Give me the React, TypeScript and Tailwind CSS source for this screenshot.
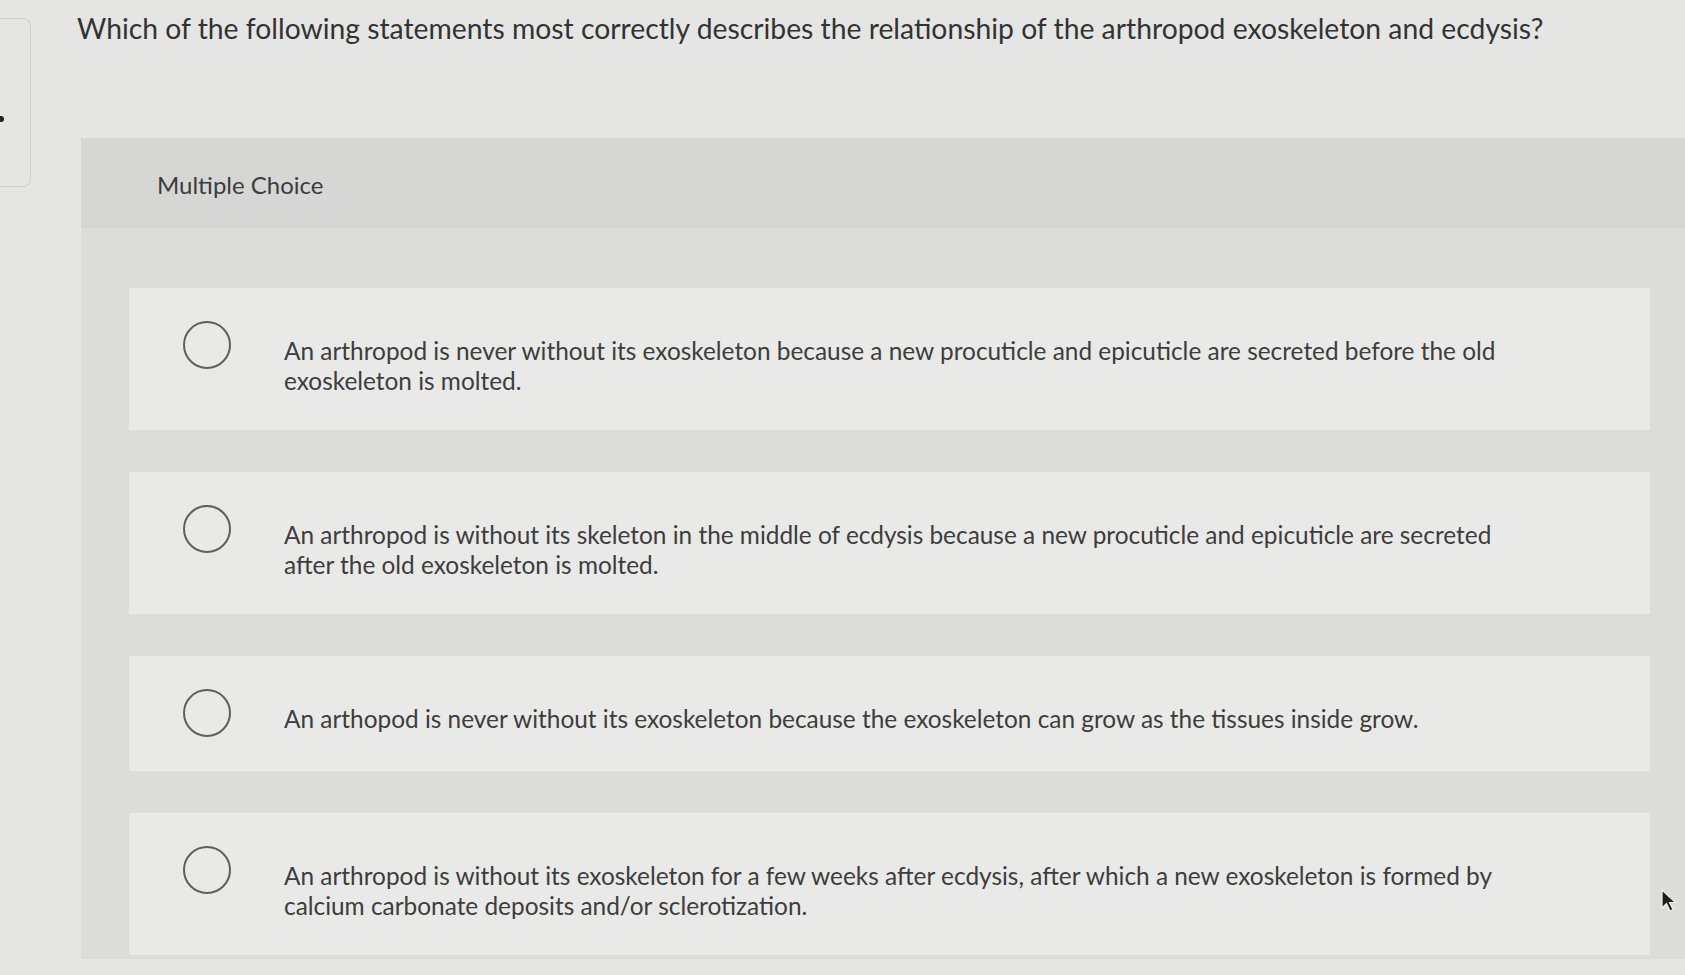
const options = [
  "An arthropod is never without its exoskeleton because a new procuticle and epicuticle are secreted before the old exoskeleton is molted.",
  "An arthropod is without its skeleton in the middle of ecdysis because a new procuticle and epicuticle are secreted after the old exoskeleton is molted.",
  "An arthopod is never without its exoskeleton because the exoskeleton can grow as the tissues inside grow.",
  "An arthropod is without its exoskeleton for a few weeks after ecdysis, after which a new exoskeleton is formed by calcium carbonate deposits and/or sclerotization.",
];

function Radio() {
  return (
    <span className="block shrink-0 w-[48px] h-[48px] rounded-full border-2 border-[#5f5f5f]" />
  );
}

export default function App() {
  return (
    <div
      className="relative w-[1685px] h-[975px] overflow-hidden bg-[#e5e5e3] flex text-[#3a3a3a]"
      style={{ fontFamily: "Lato, 'Open Sans', sans-serif" }}
    >
      {/* left edge tab */}
      <div className="w-[31px] shrink-0 pt-[18px]">
        <div className="relative h-[169px] border border-l-0 border-[#cfcfcd] rounded-r-lg">
          <span className="absolute left-0 top-[97px] w-[4px] h-[6px] bg-[#222] rounded-r-full" />
        </div>
      </div>

      <div className="flex-1 flex flex-col pl-[46px] pt-[11px]">
        <h1 className="text-[28.3px] leading-[34px] text-[#333]">
          Which of the following statements most correctly describes the relationship of the arthropod exoskeleton and ecdysis?
        </h1>

        <section className="mt-[93px] ml-[4px] bg-[#dcdcda]">
          <div className="h-[90px] pl-[76px] pt-[32px] bg-[#d6d6d4] text-[24px] leading-[30px] text-[#3c3c3c]">
            Multiple Choice
          </div>
          <div className="flex flex-col gap-[42px] pt-[60px] pb-[4px] pl-[48px] pr-[35px]">
            {options.map((text) => (
              <div
                key={text}
                className="flex items-start bg-[#e9e9e7] pl-[54px] pt-[33px] pb-[34px]"
              >
                <Radio />
                <p className="ml-[53px] mt-[15px] max-w-[1245px] text-[24.4px] leading-[30px] text-[#3d3d3d]">
                  {text}
                </p>
              </div>
            ))}
          </div>
        </section>
      </div>

      {/* mouse pointer */}
      <svg
        className="absolute left-[1660px] top-[888px]"
        width="18"
        height="26"
        viewBox="0 0 18 26"
      >
        <path d="M2 2 L2 20 L6.5 15.5 L10 23 L13 21.5 L9.5 14.5 L15.5 14.5 Z" fill="#1e1e1e" stroke="#f0f0f0" strokeWidth="1.2" />
      </svg>
    </div>
  );
}
